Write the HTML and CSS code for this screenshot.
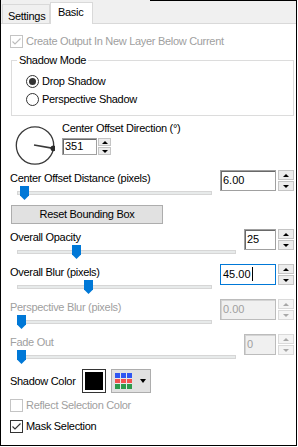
FILE: index.html
```html
<!DOCTYPE html>
<html>
<head>
    <meta charset="UTF-8">
    <title>Drop Shadow</title>
    <link rel="stylesheet" href="styles.css">
</head>
<body>
<div class="window">
    <div class="tabs">
        <div class="tab">Settings</div>
        <div class="tab tab-active">Basic</div>
        <div class="tabs-rest"></div>
    </div>

    <div class="panel">
        <div class="check-row disabled">
            <span class="checkbox"><svg width="11" height="11"><polyline points="1.5,5.5 4,8 9.5,2.5"/></svg></span>
            <span>Create Output In New Layer Below Current</span>
        </div>

        <fieldset class="group">
            <legend>Shadow Mode</legend>
            <div class="radio-row"><span class="radio selected"></span>Drop Shadow</div>
            <div class="radio-row"><span class="radio"></span>Perspective Shadow</div>
        </fieldset>

        <div class="dial-row">
            <svg class="dial" width="40" height="40">
                <circle cx="20" cy="20.5" r="18.7" fill="none" stroke="#3a3a3a" stroke-width="1.3"/>
                <line x1="19" y1="20" x2="38.4" y2="23.4" stroke="#3a3a3a" stroke-width="1.6"/>
                <circle cx="38.4" cy="23.4" r="2.8" fill="#2a2a2a"/>
            </svg>
            <div class="dial-controls">
                <div class="label">Center Offset Direction (°)</div>
                <div class="spin spin-dial">
                    <div class="spin-input">351</div>
                    <div class="spin-buttons">
                        <span class="spin-btn up"></span>
                        <span class="spin-btn down"></span>
                    </div>
                </div>
            </div>
        </div>

        <div class="slider-row">
            <div class="slider-main">
                <div class="label">Center Offset Distance (pixels)</div>
                <div class="track"><span class="thumb" style="left: 3px"></span></div>
            </div>
            <div class="spin spin-wide">
                <div class="spin-input">6.00</div>
                <div class="spin-buttons">
                    <span class="spin-btn up"></span>
                    <span class="spin-btn down"></span>
                </div>
            </div>
        </div>

        <button class="reset-btn">Reset Bounding Box</button>

        <div class="slider-row">
            <div class="slider-main">
                <div class="label">Overall Opacity</div>
                <div class="track"><span class="thumb" style="left: 55px"></span></div>
            </div>
            <div class="spin spin-narrow">
                <div class="spin-input">25</div>
                <div class="spin-buttons">
                    <span class="spin-btn up"></span>
                    <span class="spin-btn down"></span>
                </div>
            </div>
        </div>

        <div class="slider-row">
            <div class="slider-main">
                <div class="label">Overall Blur (pixels)</div>
                <div class="track"><span class="thumb" style="left: 67px"></span></div>
            </div>
            <div class="spin spin-wide focused">
                <div class="spin-input">45.00<span class="caret"></span></div>
                <div class="spin-buttons">
                    <span class="spin-btn up"></span>
                    <span class="spin-btn down"></span>
                </div>
            </div>
        </div>

        <div class="slider-row disabled">
            <div class="slider-main">
                <div class="label">Perspective Blur (pixels)</div>
                <div class="track"><span class="thumb" style="left: 0px"></span></div>
            </div>
            <div class="spin spin-wide">
                <div class="spin-input">0.00</div>
                <div class="spin-buttons">
                    <span class="spin-btn up"></span>
                    <span class="spin-btn down"></span>
                </div>
            </div>
        </div>

        <div class="slider-row disabled">
            <div class="slider-main">
                <div class="label">Fade Out</div>
                <div class="track"><span class="thumb" style="left: 0px"></span></div>
            </div>
            <div class="spin spin-narrow">
                <div class="spin-input">0</div>
                <div class="spin-buttons">
                    <span class="spin-btn up"></span>
                    <span class="spin-btn down"></span>
                </div>
            </div>
        </div>

        <div class="color-row">
            <span class="label">Shadow Color</span>
            <span class="swatch"><span class="swatch-fill"></span></span>
            <span class="palette-btn">
                <svg width="17" height="16">
                    <rect x="0" y="0" width="17" height="16" fill="#e8e8e8"/>
                    <rect x="0" y="0" width="5" height="5" fill="#2f56f2"/>
                    <rect x="6" y="0" width="5" height="5" fill="#2f56f2"/>
                    <rect x="12" y="0" width="5" height="5" fill="#2f56f2"/>
                    <rect x="0" y="6" width="5" height="4" fill="#f2524f"/>
                    <rect x="6" y="6" width="5" height="4" fill="#f2524f"/>
                    <rect x="12" y="6" width="5" height="4" fill="#f2524f"/>
                    <rect x="0" y="11" width="5" height="5" fill="#2e9a4c"/>
                    <rect x="6" y="11" width="5" height="5" fill="#2e9a4c"/>
                    <rect x="12" y="11" width="5" height="5" fill="#2e9a4c"/>
                </svg>
                <span class="drop-arrow"></span>
            </span>
        </div>

        <div class="check-row disabled reflect">
            <span class="checkbox"></span>
            <span>Reflect Selection Color</span>
        </div>

        <div class="check-row mask">
            <span class="checkbox"><svg width="11" height="11"><polyline points="1.5,5.5 4,8 9.5,2.5"/></svg></span>
            <span>Mask Selection</span>
        </div>
    </div>
</div>
</body>
</html>
```

FILE: styles.css
```css
body {
    margin: 0;
    background: #fff;
    font-family: "Liberation Sans", Arial, sans-serif;
    font-size: 11px;
    line-height: 13px;
    letter-spacing: -0.3px;
    color: #000;
}

.window {
    width: 295px;
    height: 445px;
    border: 1px solid #000;
    border-top: none;
    overflow: hidden;
}

/* tab strip */
.tabs {
    display: flex;
    align-items: flex-end;
    height: 24px;
    box-sizing: border-box;
    padding-left: 1px;
    background: #f0f0f0;
    border-bottom: 1px solid #d9d9d9;
}

.tab {
    width: 48px;
    height: 19px;
    box-sizing: border-box;
    padding: 5px 0 0 5px;
    border: 1px solid #d9d9d9;
    border-bottom: none;
    background: #f0f0f0;
}

.tab-active {
    position: relative;
    width: 43px;
    height: 22px;
    margin-bottom: -1px;
    padding: 3px 0 0 7px;
    background: #fff;
}

.tabs-rest {
    flex: 1;
    align-self: stretch;
    margin-left: 57px;
    border-top: 1px solid #000;
}

.panel {
    padding: 0 2px 0 9px;
}

.disabled {
    color: #a0a0a0;
}

/* checkboxes and radios */
.check-row {
    display: flex;
    align-items: center;
    gap: 3px;
    height: 13px;
    margin-top: 11px;
}

.check-row.reflect {
    margin-top: 6px;
}

.check-row.mask {
    margin-top: 8px;
}

.checkbox {
    display: flex;
    align-items: center;
    justify-content: center;
    width: 13px;
    height: 13px;
    box-sizing: border-box;
    border: 1px solid #333;
    background: #fff;
}

.checkbox polyline {
    fill: none;
    stroke: #333;
    stroke-width: 1.1;
}

.disabled .checkbox {
    border-color: #c4c4c4;
}

.disabled .checkbox polyline {
    stroke: #bcbcbc;
}

.group {
    margin: 6px 0 0 1px;
    padding: 8px 0 9px 5px;
    border: 1px solid #dcdcdc;
    min-width: 0;
}

.group legend {
    padding: 0 2px;
}

.radio-row {
    display: flex;
    align-items: center;
    gap: 3px;
    height: 13px;
    margin-left: 9px;
}

.radio-row + .radio-row {
    margin-top: 5px;
}

.radio {
    display: flex;
    align-items: center;
    justify-content: center;
    width: 13px;
    height: 13px;
    box-sizing: border-box;
    border: 1px solid #333;
    border-radius: 50%;
}

.radio.selected::after {
    content: "";
    width: 7px;
    height: 7px;
    border-radius: 50%;
    background: #333;
}

/* direction dial */
.dial-row {
    display: flex;
    align-items: flex-start;
    margin: 6px 0 1px;
}

.dial {
    margin: 3px 7px 0 5px;
}

.dial-controls .spin {
    margin-top: 3px;
}

/* spin boxes */
.spin {
    display: flex;
    gap: 2px;
    height: 21px;
}

.spin-input {
    display: flex;
    align-items: center;
    box-sizing: border-box;
    padding: 0 0 1px 2px;
    border: 1px solid #a0a0a0;
    box-shadow: inset 1px 1px #696969;
    background: #fff;
    letter-spacing: 0;
}

.spin-wide .spin-input {
    width: 56px;
}

.spin-narrow .spin-input {
    width: 32px;
}

.spin-dial {
    height: 17px;
    gap: 1px;
}

.spin-dial .spin-input {
    width: 35px;
}

.spin-dial .spin-buttons {
    width: 13px;
}

.spin-buttons {
    display: flex;
    flex-direction: column;
    gap: 1px;
    width: 16px;
}

.spin-btn {
    flex: 1;
    display: flex;
    align-items: center;
    justify-content: center;
    box-sizing: border-box;
    border: 1px solid #c4c4c4;
    background: #ececec;
}

.spin-btn::after {
    content: "";
    border-left: 3px solid transparent;
    border-right: 3px solid transparent;
}

.spin-btn.up::after {
    border-bottom: 3px solid #000;
}

.spin-btn.down::after {
    border-top: 3px solid #000;
}

.focused .spin-input {
    border-color: #0078d7;
    box-shadow: none;
}

.caret {
    display: inline-block;
    width: 1px;
    height: 14px;
    margin-left: 1px;
    background: #000;
}

.disabled .spin-input {
    border-color: #bcbcbc;
    box-shadow: inset 1px 1px #d4d4d4;
    background: #f0f0f0;
    color: #a0a0a0;
}

.disabled .spin-btn {
    border-color: #dadada;
    background: #f4f4f4;
}

.disabled .spin-btn.up::after {
    border-bottom-color: #a8a8a8;
}

.disabled .spin-btn.down::after {
    border-top-color: #a8a8a8;
}

/* sliders */
.slider-row {
    display: flex;
    align-items: flex-start;
    margin-top: 5px;
}

.slider-main {
    flex: 1;
    margin-right: 8px;
    padding-top: 2px;
}

.track {
    position: relative;
    height: 14px;
    margin: 1px 0 0 7px;
}

.track::before {
    content: "";
    position: absolute;
    left: 0;
    right: 0;
    top: 5px;
    height: 4px;
    box-sizing: border-box;
    border: 1px solid #d6d6d6;
    background: #e7eaea;
}

.thumb {
    position: absolute;
    top: 0;
    width: 9px;
    height: 14px;
    background: #0078d7;
    clip-path: polygon(0 0, 100% 0, 100% 68%, 50% 100%, 0 68%);
}

.reset-btn {
    display: block;
    width: 152px;
    height: 19px;
    margin: 5px 0 1px 1px;
    padding: 0;
    border: 1px solid #adadad;
    background: #e1e1e1;
    font: inherit;
    letter-spacing: inherit;
    color: #000;
}

/* shadow colour */
.color-row {
    display: flex;
    align-items: center;
    height: 24px;
    margin-top: 5px;
}

.swatch {
    width: 24px;
    height: 24px;
    box-sizing: border-box;
    margin-left: 6px;
    padding: 2px;
    border: 1px solid #333;
    background: #fff;
}

.swatch-fill {
    display: block;
    width: 100%;
    height: 100%;
    background: #000;
}

.palette-btn {
    display: flex;
    align-items: center;
    width: 40px;
    height: 24px;
    box-sizing: border-box;
    margin-left: 5px;
    padding-left: 3px;
    border: 1px solid #adadad;
    background: #e1e1e1;
}

.drop-arrow {
    margin-left: 8px;
    border-left: 3px solid transparent;
    border-right: 3px solid transparent;
    border-top: 4px solid #000;
}
```
